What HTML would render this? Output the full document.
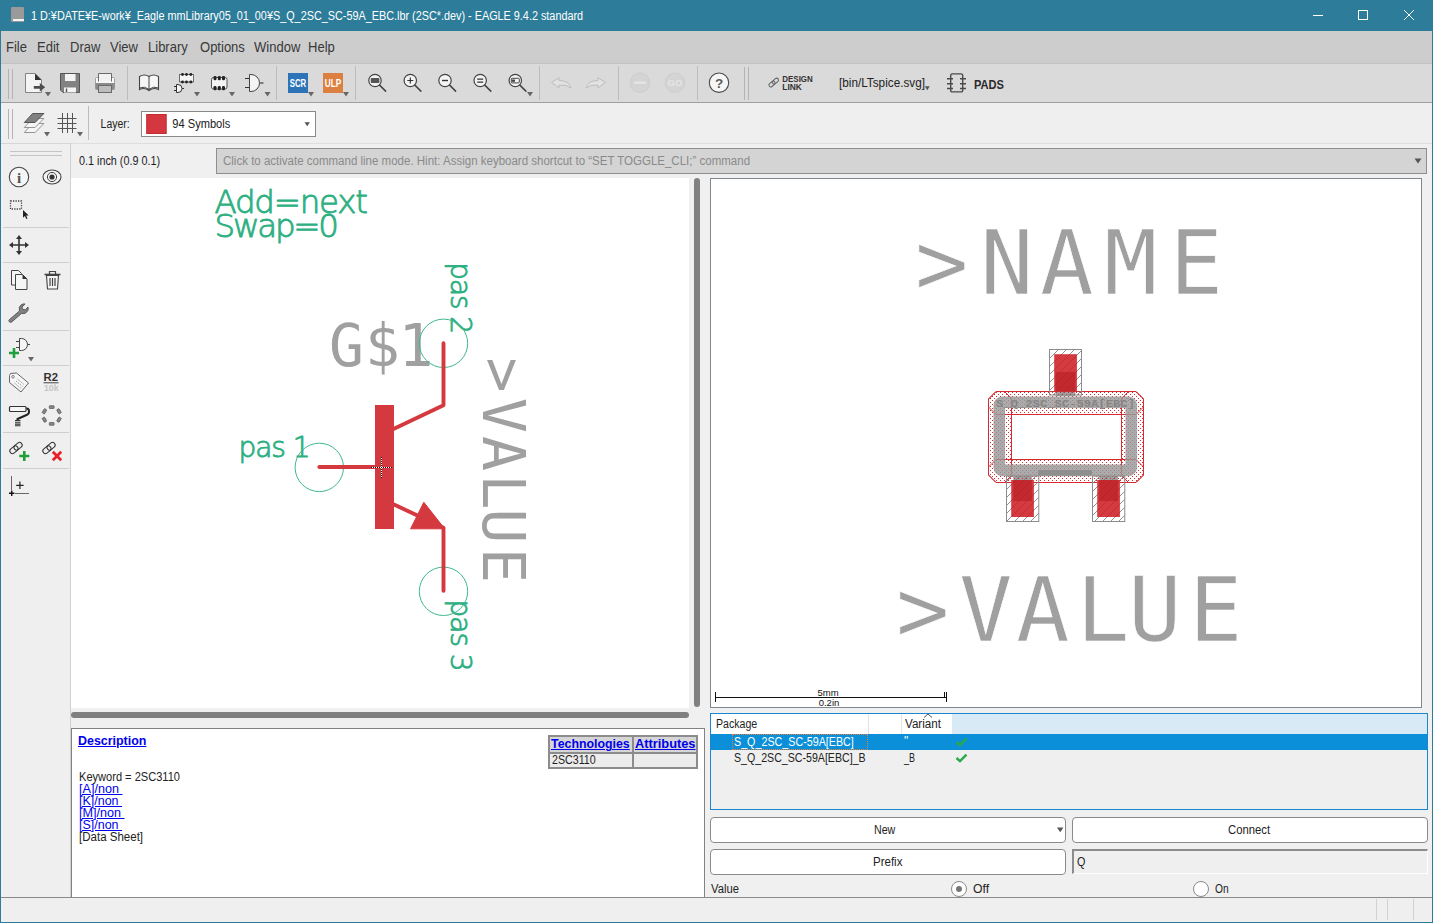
<!DOCTYPE html>
<html><head><meta charset="utf-8"><title>EAGLE</title>
<style>
*{box-sizing:border-box;margin:0;padding:0}
html,body{width:1433px;height:923px;overflow:hidden}
body{background:#f0f0f0;font-family:"Liberation Sans","Noto Sans CJK JP",sans-serif;font-size:12px;color:#1a1a1a;position:relative}
.a{position:absolute}
.t{position:absolute;white-space:nowrap;line-height:1;transform-origin:0 0}
#title{left:0;top:0;width:1433px;height:31px;background:#2d7d9a}
#menu{left:1px;top:31px;width:1431px;height:32px;background:#cdcdcd}
#tb1{left:1px;top:63px;width:1431px;height:40px;background:#dadada;border-bottom:1px solid #a0a0a0;border-top:1px solid #c2c2c2}
#tb2{left:1px;top:103px;width:1431px;height:40px;background:#efefef}
#frame{left:0;top:0;width:1433px;height:923px;border:1px solid #2d7d9a;border-top:none;pointer-events:none}
svg{position:absolute;overflow:visible}
.m{top:40px;font-size:14px;color:#383838;transform:scaleX(.93);transform-origin:0 0}
.lk{color:#0000ee;text-decoration:underline}
.b{font-weight:bold}
.d{left:78.500px;font-size:12px;color:#222}
.lk.d{color:#0000ee}
.p{font-size:12px;color:#222}
.btn{background:#fff;border:1px solid #8a8a8a;border-radius:4px}
</style></head><body>
<div id="title" class="a"></div>
<div id="menu" class="a"></div>
<div id="tb1" class="a"></div>
<div id="tb2" class="a"></div>
<div class="a" style="left:11px;top:7px;width:13px;height:15px;background:#9a9a9a;border-radius:1px"></div>
<div class="a" style="left:13px;top:19px;width:11px;height:2px;background:#f4f4f4"></div>
<div class="t" id="ttxt" style="left:31px;top:10px;font-size:12px;color:#fff;transform:scaleX(.903);transform-origin:0 0">1 D:¥DATE¥E-work¥_Eagle mmLibrary05_01_00¥S_Q_2SC_SC-59A_EBC.lbr (2SC*.dev) - EAGLE 9.4.2 standard</div>
<svg class="a" style="left:1300px;top:0" width="133" height="31" viewBox="0 0 133 31"><g stroke="#fff" stroke-width="1" fill="none"><path d="M13 15.5h10"/><rect x="58.5" y="10.5" width="9" height="9"/><path d="M104 10l10 10M114 10l-10 10"/></g></svg>

<div class="t m" style="left:6px">File</div><div class="t m" style="left:37px">Edit</div><div class="t m" style="left:70px">Draw</div><div class="t m" style="left:110px">View</div><div class="t m" style="left:148px">Library</div><div class="t m" style="left:200px">Options</div><div class="t m" style="left:254px">Window</div><div class="t m" style="left:308px">Help</div>

<!--TB1S-->
<svg class="a" style="left:0;top:0" width="1433" height="923" viewBox="0 0 1433 923" id="icons">
<defs>
<path id="dd" d="M0 0h6l-3 4.5z" fill="#666"/>
<g id="mag"><circle cx="0" cy="0" r="6.2" fill="#f4f4f4" stroke="#444" stroke-width="1.2"/><path d="M4.6 4.6L10.6 10.6" stroke="#444" stroke-width="1.5" stroke-linecap="round"/></g>
<g id="lnk" fill="none" stroke="#606060" stroke-width="1"><rect x="-3.5" y="-1.9" width="7" height="3.8" rx="1.9" transform="rotate(-40) translate(-2.2 0)"/><rect x="-3.5" y="-1.9" width="7" height="3.8" rx="1.9" transform="rotate(-40) translate(2.2 0)"/></g>
</defs>
<!-- grips -->
<g stroke="#b4b4b4" stroke-width="1"><path d="M8.5 69v30M12.5 69v30M8.5 109v30M12.5 109v30M744.5 67v33M748.5 67v33"/></g>
<g stroke="#bcbcbc" stroke-width="1"><path d="M127.5 66v34M276.5 66v34M355.5 66v34M539.5 66v34M618.5 66v34M697.5 66v34M88.500 106v34"/></g>
<!-- new doc -->
<path d="M25.500 73.500h9.500l6.500 6.500v12.500h-16z" fill="#f4f4f4" stroke="#777" stroke-width=".9"/>
<path d="M35 73.500l6.500 6.500h-6.500z" fill="#333"/>
<path d="M33.800 85.900h6v-2.900l5.400 4.300l-5.400 4.300v-2.900h-6z" fill="#4d4d4d"/>
<use href="#dd" x="45" y="92"/>
<!-- floppy -->
<path d="M60.500 73.500h19v19h-16.500l-2.500-2.500z" fill="#828282" stroke="#555"/>
<rect x="65" y="74" width="10.500" height="7" fill="#f4f4f4"/>
<rect x="64" y="87.500" width="12" height="5" fill="#f4f4f4"/><rect x="65.800" y="88.500" width="1.400" height="3.500" fill="#555"/>
<!-- printer -->
<rect x="95.500" y="77.500" width="19" height="12" rx="1" fill="#f8f8f8" stroke="#a0a0a0"/>
<rect x="95.500" y="83" width="19" height="6.500" fill="#8a8a8a"/>
<path d="M98.500 81.500v-8h13v8" fill="#f2f2f2" stroke="#6a6a6a"/>
<rect x="98.500" y="85.500" width="13" height="7" fill="#bdbdbd" stroke="#6a6a6a"/>
<!-- book -->
<path d="M139.500 76.500q5-3 9.500 0q4.500-3 9.500 0v13q-5-2.500-9.500 1q-4.500-3.500-9.500-1z" fill="#f6f6f6" stroke="#444" stroke-width="1.100"/>
<path d="M149 76.500v14" stroke="#444" stroke-width="1"/>
<path d="M139.500 88q5-2.200 9.500 1.300q4.500-3.500 9.500-1.300" fill="none" stroke="#444" stroke-width="1"/>
<!-- dip+gate -->
<rect x="179.500" y="74.500" width="14" height="7.500" fill="#f4f4f4" stroke="#444" stroke-dasharray="1 0"/>
<g fill="#222"><circle cx="182.500" cy="74.500" r="1.400"/><circle cx="186.500" cy="74.500" r="1.400"/><circle cx="190.800" cy="74.500" r="1.400"/><circle cx="182.500" cy="82" r="1.400"/><circle cx="186.500" cy="82" r="1.400"/><circle cx="190.800" cy="82" r="1.400"/></g>
<path d="M176.500 84.500h1.500a4 4 0 0 1 0 8h-1.500z" fill="#f4f4f4" stroke="#333"/><path d="M174 86.500h2.500M174 90.500h2.500M182 88.500h2" stroke="#333"/>
<use href="#dd" x="194" y="92"/>
<!-- dip -->
<rect x="211.500" y="77.500" width="15.500" height="11.500" rx="2" fill="#f4f4f4" stroke="#555"/>
<g fill="#222"><rect x="213.500" y="76" width="3" height="4.200" rx="1.300"/><rect x="217.800" y="76" width="3" height="4.200" rx="1.300"/><rect x="222" y="76" width="3" height="4.200" rx="1.300"/><rect x="213.500" y="86" width="3" height="4.200" rx="1.300"/><rect x="217.800" y="86" width="3" height="4.200" rx="1.300"/><rect x="222" y="86" width="3" height="4.200" rx="1.300"/></g>
<use href="#dd" x="229" y="92"/>
<!-- and gate -->
<path d="M249.500 74.500h1.500a8.500 8.500 0 0 1 0 17h-1.500z" fill="#f4f4f4" stroke="#444"/>
<path d="M245 78.500h4.500M245 87.500h4.500" stroke="#333" stroke-width="1.200"/><path d="M259 83h4.500" stroke="#666" stroke-width="1.600"/>
<use href="#dd" x="264.500" y="92"/>
<!-- SCR / ULP -->
<rect x="288" y="73" width="20" height="20" fill="#2d73b8"/><use href="#dd" x="308" y="92"/>
<text x="298" y="86.500" font-family="Liberation Sans,sans-serif" font-weight="bold" font-size="10.500" fill="#fff" text-anchor="middle" textLength="16.500" lengthAdjust="spacingAndGlyphs">SCR</text>
<rect x="323" y="73" width="20" height="20" fill="#db8040"/><use href="#dd" x="343" y="92"/>
<text x="333" y="86.500" font-family="Liberation Sans,sans-serif" font-weight="bold" font-size="10.500" fill="#fff" text-anchor="middle" textLength="16.500" lengthAdjust="spacingAndGlyphs">ULP</text>
<!-- zooms -->
<use href="#mag" x="375" y="80.500"/><rect x="370.800" y="78" width="8.600" height="5" rx=".8" fill="#555"/>
<use href="#mag" x="410.300" y="80.500"/><path d="M407.300 80.500h6M410.300 77.500v6" stroke="#333" stroke-width="1.200"/>
<use href="#mag" x="445" y="80.500"/><path d="M442 80.500h6" stroke="#333" stroke-width="1.400"/>
<use href="#mag" x="480.200" y="80.500"/><path d="M477.200 79.200h6M477.200 82.200h6" stroke="#333" stroke-width="1.200"/>
<use href="#mag" x="515.300" y="80.500"/><rect x="511.300" y="78.300" width="8" height="4.600" rx=".8" fill="#f4f4f4" stroke="#444"/><rect x="512" y="79.500" width="3" height="2.300" fill="#444"/>
<use href="#dd" x="527" y="92"/>
<!-- undo redo -->
<path d="M551.500 82.500l7.500-4.800v2.800q10 0 12 7.500q-4-3.500-12-3v2.800z" fill="#e2e2e2" stroke="#bdbdbd"/>
<path d="M605.500 82.500l-7.500-4.800v2.800q-10 0-12 7.500q4-3.500 12-3v2.800z" fill="#e2e2e2" stroke="#bdbdbd"/>
<!-- stop / go -->
<circle cx="640" cy="82.700" r="9.700" fill="#d4d4d4" stroke="#cdcdcd"/><path d="M634 82.700h12" stroke="#e6e6e6" stroke-width="2.200"/>
<circle cx="675" cy="82.700" r="9.700" fill="#d4d4d4" stroke="#cdcdcd"/>
<text x="675" y="86.200" font-family="Liberation Sans,sans-serif" font-weight="bold" font-size="9.500" fill="#e6e6e6" text-anchor="middle">GO</text>
<!-- help -->
<circle cx="719" cy="82.700" r="9.700" fill="#f6f6f6" stroke="#4a4a4a" stroke-width="1.100"/>
<text x="719" y="87.500" font-family="Liberation Sans,sans-serif" font-weight="bold" font-size="13.500" fill="#5a5a5a" text-anchor="middle">?</text>
<!-- design link -->
<use href="#lnk" x="773.700" y="82.600"/>
<text x="782.300" y="82.200" font-family="Liberation Sans,sans-serif" font-weight="bold" font-size="8.200" fill="#333" textLength="30.500" lengthAdjust="spacingAndGlyphs">DESIGN</text>
<text x="782.300" y="89.500" font-family="Liberation Sans,sans-serif" font-weight="bold" font-size="8.200" fill="#333" textLength="19.500" lengthAdjust="spacingAndGlyphs">LINK</text>
<text x="839" y="87" font-family="Liberation Sans,sans-serif" font-size="12" fill="#222" textLength="86" lengthAdjust="spacingAndGlyphs">[bin/LTspice.svg]</text>
<path d="M924.800 86.300h5l-2.500 4z" fill="#555"/>
<!-- pads -->
<rect x="950.700" y="73.900" width="12" height="18" rx="1.500" fill="none" stroke="#4a4a4a" stroke-width="1.400"/>
<path d="M947 78.800h6M947 83.700h6M947 88.600h6M960 78.800h6M960 83.700h6M960 88.600h6" stroke="#4a4a4a" stroke-width="1.500"/>
<text x="974" y="88.600" font-family="Liberation Sans,sans-serif" font-weight="bold" font-size="12" fill="#2a2a2a" textLength="30" lengthAdjust="spacingAndGlyphs">PADS</text>
<!-- TB2 -->
<path d="M32.600 123.500h11.300l-8.800 9h-10.800z" fill="#f6f6f6" stroke="#8a8a8a" stroke-width=".9"/>
<path d="M32.600 118.500h11.300l-8.800 9h-10.800z" fill="#f6f6f6" stroke="#8a8a8a" stroke-width=".9"/>
<path d="M32.600 113.500h11.300l-8.800 9h-10.800z" fill="#808080" stroke="#4a4a4a" stroke-width=".9"/>
<use href="#dd" x="44" y="132"/>
<path d="M62.500 113v20M67.500 113v20M72.500 113v20M57.500 118.500h19M57.500 123.500h19M57.500 128.500h19" stroke="#555" stroke-width="1" fill="none"/>
<use href="#dd" x="77" y="132"/>
<text x="100.600" y="128.200" font-family="Liberation Sans,sans-serif" font-size="12" fill="#222" textLength="29" lengthAdjust="spacingAndGlyphs">Layer:</text>
<rect x="141.500" y="111.500" width="174" height="25" fill="#fff" stroke="#8a8a8a"/>
<rect x="146.700" y="114.500" width="19.500" height="19" fill="#d4373f" stroke="#c22a30"/>
<text x="172.300" y="128.200" font-family="Liberation Sans,sans-serif" font-size="12" fill="#222" textLength="58" lengthAdjust="spacingAndGlyphs">94 Symbols</text>
<path d="M304.500 122.300h5.400l-2.700 4z" fill="#555"/>
</svg>
<!--TB1E-->
<!--TB2-->
<!--LEFTS-->
<div class="a" style="left:1px;top:143px;width:70px;height:754px;background:#efefef;border-right:1px solid #d0d0d0;border-top:1px solid #d6d6d6"></div>
<svg class="a" style="left:0;top:0" width="80" height="923" viewBox="0 0 80 923">
<defs><g id="lnk2" fill="none" stroke="#333" stroke-width="1"><rect x="-4.500" y="-2.700" width="9" height="5.400" rx="2.700" transform="rotate(-40) translate(-2.700 0)"/><rect x="-4.500" y="-2.700" width="9" height="5.400" rx="2.700" transform="rotate(-40) translate(2.700 0)"/></g></defs>
<g stroke="#c4c4c4" stroke-width="1"><path d="M10 151.500h52M10 155.500h52"/></g>
<g stroke="#cfcfcf" stroke-width="1"><path d="M3 227.500h66M3 262.500h66M3 330.500h66M3 365.500h66M3 432.500h66M3 468.500h66"/></g>
<!-- info -->
<circle cx="19" cy="177" r="9.700" fill="#f6f6f6" stroke="#444" stroke-width="1.100"/>
<text x="19" y="182.500" font-family="Liberation Serif,serif" font-weight="bold" font-size="15" fill="#555" text-anchor="middle">i</text>
<!-- eye -->
<ellipse cx="52" cy="177" rx="9" ry="7" fill="#f6f6f6" stroke="#444" stroke-width="1.100"/>
<circle cx="52" cy="177" r="4.600" fill="#f6f6f6" stroke="#444" stroke-width="1"/><circle cx="52" cy="177" r="2.600" fill="#333"/>
<!-- select -->
<rect x="10.500" y="201" width="11" height="8" fill="none" stroke="#444" stroke-width="1.300" stroke-dasharray="1.300 1.200"/>
<path d="M23 210v7.800l1.900-1.700l1.400 3l1.200-.6l-1.400-2.900h2.600z" fill="#222"/>
<!-- move -->
<path d="M19 236.500v17M10.500 245h17" stroke="#333" stroke-width="1.600"/>
<path d="M19 235l3 4h-6zM19 255l3-4h-6zM9 245l4-3v6zM29 245l-4-3v6z" fill="#333"/>
<!-- copy -->
<path d="M11.500 270.500h7l3 3v11.500h-10z" fill="#f6f6f6" stroke="#444"/>
<path d="M15.500 274.500h7l4.500 4.500v10.500h-11.500z" fill="#f6f6f6" stroke="#444"/><path d="M22.500 274.500l4.500 4.500h-4.500z" fill="#333"/>
<!-- trash -->
<path d="M46.500 275.500h12l-1 13.500h-10z" fill="#f6f6f6" stroke="#444" stroke-width="1.100"/>
<path d="M44.500 274.500h16" stroke="#444" stroke-width="1.600"/><path d="M49.500 274v-2.500h6v2.500" fill="none" stroke="#444" stroke-width="1.200"/>
<path d="M50 278v8M52.500 278v8M55 278v8" stroke="#444" stroke-width="1.200"/>
<!-- wrench -->
<path d="M9.800 321.800l11.200-9.600q-1.500-4.500 2.200-7q2-1.200 4-.6l-3.400 3.200l.8 2.600l2.800.6l3-3.200q.8 2.400-.4 4.500q-2.400 3.800-6.800 2.700l-10.800 9.400q-1.800 .8-2.800-.5q-.8-1.200.2-2.100z" fill="#828282" stroke="#4a4a4a" stroke-width=".9" transform="translate(9 303.500) scale(.91) translate(-9.500 -304)"/>
<!-- add gate -->
<path d="M19.500 338.500h2a6 6 0 0 1 0 12h-2z" fill="#f6f6f6" stroke="#444"/><path d="M16 341.500h3.500M16 347.500h3.500M27.500 344.500h2.500" stroke="#444"/>
<path d="M14 348v10M9 353h10" stroke="#1d9f3c" stroke-width="2.600"/>
<path d="M28 357h6l-3 4.500z" fill="#666"/>
<!-- tag -->
<path d="M9.500 375.500l1-2l6-.5l12 10l-7.500 9l-11.500-9.500z" fill="#f6f6f6" stroke="#666" stroke-width="1"/>
<circle cx="13" cy="376.800" r="1.300" fill="none" stroke="#666" stroke-width=".8"/>
<path d="M16 381l6.500 5.500M14.500 383l6.500 5.500M17.500 379l6.500 5.500" stroke="#888" stroke-width=".8" stroke-dasharray="1.500 1"/>
<!-- R2 10k -->
<text x="43.500" y="381.300" font-family="Liberation Sans,sans-serif" font-weight="bold" font-size="10" fill="#333" textLength="14.500" lengthAdjust="spacingAndGlyphs">R2</text>
<path d="M43.500 382.800h15" stroke="#444" stroke-width="1"/>
<text x="44" y="390.700" font-family="Liberation Sans,sans-serif" font-weight="bold" font-size="9" fill="#c4c4c4" textLength="14.500" lengthAdjust="spacingAndGlyphs">10k</text>
<!-- roller -->
<rect x="9.500" y="406.500" width="16.500" height="5" rx="1" fill="#f6f6f6" stroke="#333" stroke-width="1.200"/>
<path d="M26.500 408.500q2.800 0 2.500 3.500q0 2-2.500 3l-9 4v1.500" fill="none" stroke="#222" stroke-width="2"/>
<path d="M15 420.500h5.500M15 422.300h5.500M15 424.100h5.500M15 425.800h5.500" stroke="#333" stroke-width="1.100"/>
<!-- dashed polygon -->
<g fill="#888" stroke="#555" stroke-width=".7" transform="translate(51.700 415.500)">
<rect x="-2.400" y="-9.800" width="4.800" height="2.800" rx=".6"/><rect x="-2.400" y="7" width="4.800" height="2.800" rx=".6"/>
<rect x="-2.400" y="-9.800" width="4.800" height="2.800" rx=".6" transform="rotate(60)"/><rect x="-2.400" y="-9.800" width="4.800" height="2.800" rx=".6" transform="rotate(120)"/>
<rect x="-2.400" y="-9.800" width="4.800" height="2.800" rx=".6" transform="rotate(240)"/><rect x="-2.400" y="-9.800" width="4.800" height="2.800" rx=".6" transform="rotate(300)"/>
</g>
<!-- link + / x -->
<use href="#lnk2" x="16" y="448"/>
<path d="M24.300 451v10M19.300 456h10" stroke="#1d9f3c" stroke-width="2.600"/>
<use href="#lnk2" x="49" y="448"/>
<path d="M52.800 451.800l8.400 8.400M61.200 451.800l-8.400 8.400" stroke="#e8202a" stroke-width="2.800"/>
<!-- origin -->
<path d="M11.500 476v14M15 493.500h14" stroke="#666" stroke-width="1"/><path d="M9 493.300h5.400M11.700 490.600v5.400" stroke="#111" stroke-width="1.400"/>
<path d="M16.200 485.300h7.400M19.900 481.600v7.400" stroke="#222" stroke-width="1.200"/>
</svg>
<!--LEFTE-->
<!--CMDS-->
<!-- command line -->
<div class="a" style="left:71px;top:143px;width:1361px;height:1px;background:#dedede"></div>
<div class="t" id="coord" style="transform:scaleX(0.9);left:79px;top:155px;font-size:12px;color:#1e1e1e">0.1 inch (0.9 0.1)</div>
<div class="a" style="left:216px;top:148px;width:1211px;height:26px;background:#d4d4d4;border:1px solid #8e8e8e"></div>
<div class="t" id="cmdt" style="transform:scaleX(0.959);left:223px;top:155px;font-size:12px;color:#8a8a8a">Click to activate command line mode. Hint: Assign keyboard shortcut to “SET TOGGLE_CLI;” command</div>
<svg class="a" style="left:1414px;top:158px" width="8" height="6"><path d="M0.500 0.500h7l-3.500 5z" fill="#555"/></svg>
<!-- left canvas -->
<div class="a" style="left:71px;top:178px;width:618px;height:530px;background:#fff"></div>
<div class="a" style="left:694px;top:178px;width:6px;height:529px;background:#808080;border-radius:3px"></div>
<div class="a" style="left:71px;top:712px;width:618px;height:6px;background:#808080;border-radius:3px"></div>
<!-- right canvas -->
<div class="a" style="left:710px;top:178px;width:712px;height:530px;background:#fff;border:1px solid #7f8791"></div>
<!--CMDE-->
<!--LCS-->
<svg class="a" style="left:0;top:0" width="1433" height="923" viewBox="0 0 1433 923" id="lc">
<g font-family="DejaVu Sans,sans-serif" font-weight="200" fill="#2eb082" stroke="#2eb082" stroke-width=".9" stroke-linejoin="round">
<text id="v1" x="214.500" y="213" font-size="32.500" textLength="153.500" lengthAdjust="spacing">Add=next</text>
<text id="v2" x="214.500" y="237" font-size="32.500" textLength="124.500" lengthAdjust="spacing">Swap=0</text>
<text id="v3" x="238.500" y="457.300" font-size="28" textLength="72" lengthAdjust="spacing">pas 1</text>
<text id="v4" transform="translate(451.400 262.200) rotate(90)" font-size="28" textLength="72" lengthAdjust="spacing">pas 2</text>
<text id="v5" transform="translate(451.400 599.600) rotate(90)" font-size="28" textLength="72" lengthAdjust="spacing">pas 3</text>
</g>
<g font-family="DejaVu Sans Mono,monospace" fill="#a0a0a0" font-size="58">
<text id="g1" x="329 365 398.500" y="365.500">G$1</text>
<text id="g2" transform="translate(482.500 360) rotate(90)" x="-2.500 38 76 114.500 148.500 188" y="0">&gt;VALUE</text>
</g>
<g fill="none" stroke="#40b890" stroke-width="1"><circle cx="319.300" cy="467.400" r="24.200"/><circle cx="443.500" cy="343.300" r="24.200"/><circle cx="443.500" cy="591.300" r="24.200"/></g>
<rect x="375" y="405" width="19" height="124" fill="#d4393f"/>
<g fill="none" stroke="#d4393f" stroke-width="3.900" stroke-linecap="round" stroke-linejoin="round">
<path d="M319.300 467H376"/><path d="M443.500 343.300V405.300L394 428.700"/><path d="M394 504.500L443.500 527.700V590.800"/>
</g>
<path d="M423.800 502.200L444.700 528.800H410.600z" fill="#d4393f" stroke="#d4393f" stroke-width="1" stroke-linejoin="round"/>
<path d="M371 467.500h21M381.500 457v21" stroke="#fff" stroke-width="1"/>
<path d="M371 467.500h21M381.500 457v21" stroke="#111" stroke-width="1" stroke-dasharray="1 1"/>
</svg>
<!--LCE-->
<!--RCS-->
<svg class="a" style="left:0;top:0" width="1433" height="923" viewBox="0 0 1433 923" id="rc">
<defs>
<pattern id="dots" x="0" y="0" width="4" height="4" patternUnits="userSpaceOnUse"><rect x="0" y="0" width="1" height="1" fill="#d62b31"/><rect x="2" y="2" width="1" height="1" fill="#d62b31"/></pattern>
<pattern id="hatch" x="0" y="0" width="8" height="8" patternUnits="userSpaceOnUse"><path d="M-1 9L9-1M-1 1L1-1M7 9L9 7" stroke="#777" stroke-width=".8"/></pattern>
<pattern id="hatchr" x="0" y="0" width="8" height="8" patternUnits="userSpaceOnUse"><path d="M-1 9L9-1M-1 1L1-1M7 9L9 7" stroke="#a02226" stroke-width=".8"/></pattern>
</defs>
<g font-family="DejaVu Sans Mono,monospace" fill="#a0a0a0" font-size="89" stroke="#fff" stroke-width=".700" paint-order="fill stroke">
<text id="n1" x="915 980 1040 1104 1169.500" y="294.300">&gt;NAME</text>
<text id="n2" x="896 959 1016 1076 1128 1189" y="640.500">&gt;VALUE</text>
</g>
<!-- leads -->
<rect x="1055.600" y="372" width="19.700" height="24" fill="#a0a0a0"/>
<rect x="1013.300" y="476" width="18.500" height="25" fill="#a0a0a0"/><rect x="1099.300" y="476" width="18.600" height="25" fill="#a0a0a0"/>
<!-- keepout wires -->
<g fill="url(#dots)" stroke="#d62b31" stroke-width="1">
<path d="M996 391.500H1136L1143.500 399V407L1136 414.500H996L988.500 407V399z"/>
<path d="M996 459.500H1136L1143.500 467V475L1136 482.500H996L988.500 475V467z"/>
<path d="M988.500 399L996 391.500H1004.500L1011.500 398.500V475.500L1004.500 482.500H996L988.500 475z"/>
<path d="M1121.500 398.500L1128.500 391.500H1136L1143.500 399V475L1136 482.500H1128.500L1121.500 475.500z"/>
</g>
<!-- gray frame -->
<rect x="999.300" y="402.200" width="132" height="68.200" rx="3" fill="none" stroke="#999" stroke-width="11.600" stroke-linejoin="round" opacity=".82"/>
<rect x="1038.200" y="470" width="53.700" height="5.600" fill="#8e8e8e"/>
<text x="996" y="406.500" font-family="Liberation Mono,monospace" font-weight="bold" font-size="11" fill="#858585" textLength="139" lengthAdjust="spacingAndGlyphs">S_Q_2SC_SC-59A[EBC]</text>
<!-- stop masks + pads -->
<g>
<rect x="1049.500" y="349.500" width="32" height="45.500" fill="url(#hatch)" stroke="#8c8c8c"/>
<rect x="1054.200" y="354.200" width="22.700" height="37.200" fill="#d43a40"/><rect x="1055.600" y="372" width="19.700" height="19.400" fill="#c2282d"/>
<rect x="1054.200" y="354.200" width="22.700" height="37.200" fill="url(#hatchr)" opacity=".5"/>
<rect x="1006.500" y="476" width="32.300" height="45.500" fill="url(#hatch)" stroke="#8c8c8c"/>
<rect x="1011.200" y="480" width="22.700" height="37" fill="#d43a40"/><rect x="1013.300" y="480" width="18.500" height="21" fill="#c2282d"/>
<rect x="1011.200" y="480" width="22.700" height="37" fill="url(#hatchr)" opacity=".5"/>
<rect x="1092.500" y="476" width="32.300" height="45.500" fill="url(#hatch)" stroke="#8c8c8c"/>
<rect x="1097.200" y="480" width="22.700" height="37" fill="#d43a40"/><rect x="1099.300" y="480" width="18.600" height="21" fill="#c2282d"/>
<rect x="1097.200" y="480" width="22.700" height="37" fill="url(#hatchr)" opacity=".5"/>
</g>
<!-- scale bar -->
<path d="M715.500 697.500H946.500M715.500 692v10M946.500 692v10M944.500 692v5" stroke="#111" stroke-width="1" fill="none"/>
<text x="828" y="696" font-family="Liberation Sans,sans-serif" font-size="9.500" fill="#111" text-anchor="middle">5mm</text>
<text x="829" y="706" font-family="Liberation Sans,sans-serif" font-size="9.500" fill="#111" text-anchor="middle">0.2in</text>
</svg>
<!--RCE-->
<!--DESCS-->
<!-- description -->
<div class="a" style="left:71px;top:728px;width:634px;height:169px;background:#fff;border:1px solid #828282;border-bottom:none"></div>
<div class="t lk b" id="d0" style="transform:scaleX(1.036);left:78px;top:735px;font-size:12px">Description</div>
<div class="t d" id="d1" style="transform:scaleX(0.922);top:771px">Keyword = 2SC3110</div>
<div class="t d lk" id="d2" style="transform:scaleX(1.05);top:783px">[A]/non&nbsp;</div>
<div class="t d lk" id="d3" style="transform:scaleX(1.04);top:795px">[K]/non&nbsp;</div>
<div class="t d lk" id="d4" style="transform:scaleX(1.05);top:807px">[M]/non&nbsp;</div>
<div class="t d lk" id="d5" style="transform:scaleX(1.04);top:819px">[S]/non&nbsp;</div>
<div class="t d" id="d6" style="transform:scaleX(0.96);top:831px">[Data Sheet]</div>
<div class="a" style="left:548px;top:735px;width:150px;height:34px;background:#8c8c8c"></div>
<div class="a" style="left:550px;top:737px;width:82px;height:15px;background:#d6d6d6"></div>
<div class="a" style="left:634px;top:737px;width:62px;height:15px;background:#d6d6d6"></div>
<div class="a" style="left:550px;top:754px;width:82px;height:13px;background:#ececec"></div>
<div class="a" style="left:634px;top:754px;width:62px;height:13px;background:#ececec"></div>
<div class="t lk b" id="d7" style="transform:scaleX(1.03);left:551px;top:738px;font-size:12px">Technologies</div>
<div class="t lk b" id="d8" style="transform:scaleX(1.067);left:634.500px;top:738px;font-size:12px">Attributes</div>
<div class="t" id="d9" style="transform:scaleX(0.889);left:551.500px;top:754px;font-size:12px;color:#222">2SC3110</div>
<!-- package list -->
<div class="a" style="left:710px;top:713px;width:718px;height:97px;background:#efefef;border:1px solid #1a86d0"></div>
<div class="a" style="left:711px;top:714px;width:716px;height:20px;background:#d9eaf7"></div>
<div class="a" style="left:711px;top:714px;width:157px;height:20px;background:#fff"></div>
<div class="a" style="left:869px;top:714px;width:32px;height:20px;background:#fff"></div>
<div class="a" style="left:902px;top:714px;width:50px;height:20px;background:#fff"></div>
<div class="a" style="left:868px;top:714px;width:1px;height:20px;background:#e4e4e4"></div><div class="a" style="left:901px;top:714px;width:1px;height:20px;background:#e4e4e4"></div>
<div class="t p" id="p0" style="transform:scaleX(0.882);left:715.500px;top:718px">Package</div>
<div class="t p" id="p1" style="transform:scaleX(0.97);left:905px;top:718px">Variant</div>
<svg class="a" style="left:923px;top:713px" width="10" height="5"><path d="M1 4.500L5 1L9 4.500" fill="none" stroke="#555" stroke-width="1"/></svg>
<div class="a" style="left:711px;top:734px;width:716px;height:16px;background:#0a8fd8"></div>
<div class="a" style="left:732px;top:734px;width:136px;height:16px;border:1px dotted #e8803a"></div>
<div class="t p" id="p2" style="transform:scaleX(0.894);left:733.500px;top:736px;color:#fff">S_Q_2SC_SC-59A[EBC]</div>
<div class="t p" id="p3" style="left:904px;top:735px;color:#fff">"</div>
<div class="t p" id="p4" style="transform:scaleX(0.885);left:733.500px;top:752px">S_Q_2SC_SC-59A[EBC]_B</div>
<div class="t p" id="p5" style="transform:scaleX(0.75);left:904px;top:752px">_B</div>
<svg class="a" style="left:955px;top:736px" width="14" height="28"><path d="M1.500 6l3.500 3.200l6.500-6.500" fill="none" stroke="#2aa84a" stroke-width="2.400"/><path d="M1.500 22l3.500 3.200l6.500-6.500" fill="none" stroke="#2aa84a" stroke-width="2.400"/></svg>
<!-- buttons -->
<div class="a btn" style="left:710px;top:817px;width:356px;height:26px"></div>
<div class="a btn" style="left:1072px;top:817px;width:356px;height:26px"></div>
<div class="a btn" style="left:710px;top:849px;width:356px;height:26px"></div>
<div class="a" style="left:1072px;top:849px;width:356px;height:25px;background:#efefef;border-top:2px solid #8c8c8c;border-left:2px solid #8c8c8c;border-bottom:1px solid #fff;border-right:1px solid #fff"></div>
<div class="t p" id="b0" style="transform:scaleX(0.887);left:874px;top:824px">New</div>
<svg class="a" style="left:1057px;top:827px" width="7" height="6"><path d="M0 0.500h6.400l-3.200 4.800z" fill="#555"/></svg>
<div class="t p" id="b1" style="transform:scaleX(0.94);left:1228px;top:824px">Connect</div>
<div class="t p" id="b2" style="transform:scaleX(0.958);left:873px;top:856px">Prefix</div>
<div class="t p" id="b3" style="transform:scaleX(0.9);left:1077px;top:856px">Q</div>
<div class="t p" id="b4" style="transform:scaleX(0.936);left:710.500px;top:883px">Value</div>
<div class="a" style="left:951px;top:881px;width:16px;height:16px;border-radius:8px;background:#fff;border:1px solid #8a8a8a"></div>
<div class="a" style="left:956px;top:886px;width:6px;height:6px;border-radius:3px;background:#777"></div>
<div class="t p" id="b5" style="transform:scaleX(1.02);left:972.500px;top:883px">Off</div>
<div class="a" style="left:1193px;top:881px;width:16px;height:16px;border-radius:8px;background:#fff;border:1px solid #8a8a8a"></div>
<div class="t p" id="b6" style="transform:scaleX(0.85);left:1214.500px;top:883px">On</div>
<!-- status -->
<div class="a" style="left:1px;top:897px;width:1431px;height:25px;background:#efefef;border-top:1px solid #8a8a8a"></div>
<div class="a" style="left:1376px;top:899px;width:1px;height:21px;background:#d2d2d2"></div>
<div class="a" style="left:1387px;top:899px;width:1px;height:21px;background:#d2d2d2"></div>
<div class="a" style="left:1413px;top:899px;width:1px;height:21px;background:#d2d2d2"></div>
<!--DESCE-->
<!--PKG-->
<!--BTNS-->
<!--STATUS-->
<div id="frame" class="a"></div>
</body></html>
